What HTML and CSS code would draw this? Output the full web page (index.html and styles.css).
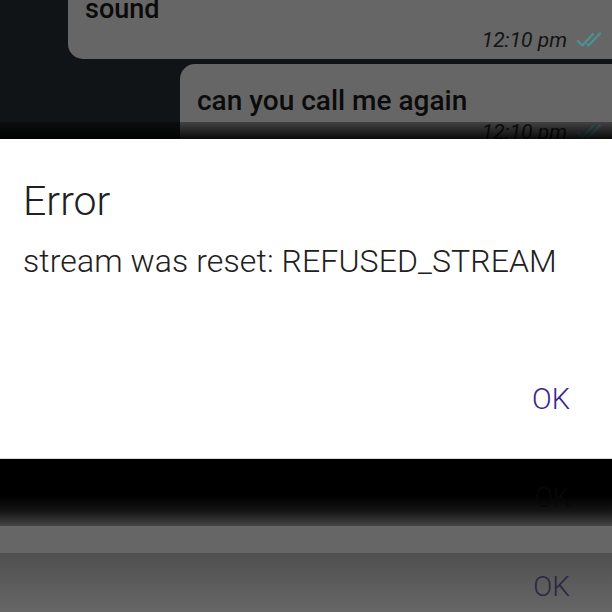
FILE: index.html
```html
<!DOCTYPE html>
<html>
<head>
<meta charset="utf-8">
<link rel="stylesheet" href="styles.css">
</head>
<body>
<div class="screen">
  <section class="chat">
    <div class="bubble bubble-in">
      <div class="msg">sound</div>
      <div class="meta"><span class="time">12:10 pm</span>
        <svg class="ticks" width="30" height="18" viewBox="0 0 30 18"><path d="M2 10 L6.5 14.5 L17 3 M11.5 13.5 L12.5 14.5 L24 2.5" fill="none" stroke="#4b9294" stroke-width="2.2" stroke-linecap="round" stroke-linejoin="round"/></svg>
      </div>
    </div>
    <div class="bubble bubble-out">
      <div class="msg">can you call me again</div>
      <div class="meta"><span class="time">12:10 pm</span>
        <svg class="ticks" width="30" height="18" viewBox="0 0 30 18"><path d="M2 10 L6.5 14.5 L17 3 M11.5 13.5 L12.5 14.5 L24 2.5" fill="none" stroke="#4b9294" stroke-width="2.2" stroke-linecap="round" stroke-linejoin="round"/></svg>
      </div>
    </div>
    <div class="chat-shade"></div>
  </section>
  <section class="dialog">
    <h1 class="dialog-title">Error</h1>
    <p class="dialog-text">stream was reset: REFUSED_STREAM</p>
    <div class="dialog-actions"><span class="btn">OK</span></div>
  </section>
  <section class="under">
    <div class="fade"><span class="ghost">OK</span></div>
    <div class="band"></div>
    <div class="sheet"><span class="sheet-btn">OK</span></div>
  </section>
</div>
</body>
</html>
```
FILE: styles.css
```css
html, body {
  margin: 0;
  padding: 0;
  background: #000;
}
.screen {
  width: 612px;
  height: 612px;
  overflow: hidden;
  display: flex;
  flex-direction: column;
}
.chat {
  position: relative;
  height: 139px;
  flex: none;
  background: #111416;
  overflow: hidden;
  display: flex;
  flex-direction: column;
  align-items: flex-end;
  gap: 5px;
}
.bubble {
  background: #666666;
  border-radius: 15px;
  box-sizing: border-box;
  font-family: Roboto, "Noto Sans", sans-serif;
  color: #0b0b0b;
  flex: none;
}
.bubble-in {
  width: 560px;
  margin-right: -16px;
  margin-top: -39px;
  padding: 32px 22px 6px 17px;
}
.bubble-out {
  width: 448px;
  margin-right: -16px;
  padding: 21px 22px 0 17px;
  height: 90px;
}
.msg {
  font-size: 28px;
  font-weight: 500;
  line-height: 32px;
}
.bubble-in .msg {
  font-size: 27px;
}
.meta {
  display: flex;
  justify-content: flex-end;
  align-items: center;
  gap: 9px;
  margin-top: 2px;
}
.time {
  font-style: italic;
  font-size: 21px;
  color: #141414;
  line-height: 26px;
}
.ticks {
  display: block;
}
.chat-shade {
  position: absolute;
  left: 0;
  right: 0;
  bottom: 0;
  height: 17px;
  background: linear-gradient(to bottom, rgba(0,0,0,0.35), rgba(0,0,0,0.9));
}
.dialog {
  height: 320px;
  flex: none;
  background: #fff;
  box-sizing: border-box;
  padding: 39px 23px 0 23px;
  font-family: Roboto, "Noto Sans", sans-serif;
  font-weight: 300;
  color: #202020;
  border-bottom: 1px solid #d8d8d8;
}
.dialog-title {
  margin: 0;
  font-size: 41px;
  font-weight: 300;
  line-height: 46px;
}
.dialog-text {
  margin: 18px 0 0 0;
  font-size: 32px;
  line-height: 38px;
  letter-spacing: 0.1px;
}
.dialog-actions {
  display: flex;
  justify-content: flex-end;
  margin-top: 102px;
  padding-right: 19px;
}
.btn {
  font-size: 29px;
  line-height: 34px;
  color: #3c2490;
}
.under {
  flex: 1;
  display: flex;
  flex-direction: column;
  font-family: Roboto, "Noto Sans", sans-serif;
  font-weight: 300;
}
.fade {
  height: 67px;
  flex: none;
  background: linear-gradient(to bottom, #000 0%, #000 55%, #151515 78%, #454545 100%);
  display: flex;
  justify-content: flex-end;
  padding-right: 42px;
  box-sizing: border-box;
  padding-top: 24px;
}
.ghost {
  font-size: 27px;
  line-height: 30px;
  color: #080808;
}
.band {
  height: 27px;
  flex: none;
  background: #666666;
}
.sheet {
  flex: 1;
  background: linear-gradient(to bottom, #4f4f4f, #676767);
  display: flex;
  justify-content: flex-end;
  padding: 18px 42px 0 0;
}
.sheet-btn {
  font-size: 28px;
  line-height: 32px;
  color: #2b2742;
}
```
